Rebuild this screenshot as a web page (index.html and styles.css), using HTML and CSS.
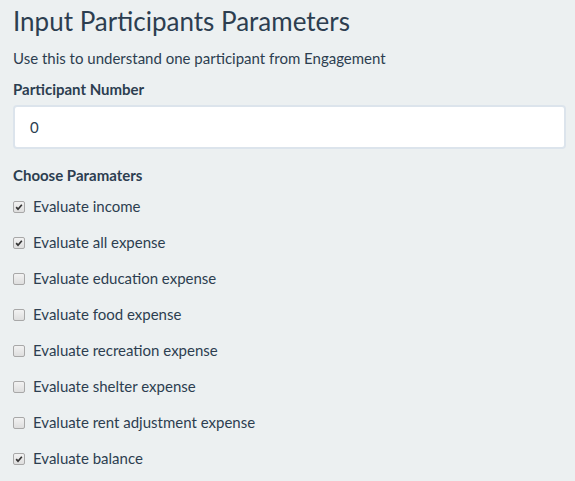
FILE: index.html
```html
<!DOCTYPE html>
<html>
<head>
<meta charset="utf-8">
<link rel="stylesheet" href="styles.css">
</head>
<body>
<div class="panel">
  <h3 class="title">Input Participants Parameters</h3>
  <p class="sub">Use this to understand one participant from Engagement</p>
  <label class="ctl-label" for="pn">Participant Number</label>
  <div class="input">0</div>
  <label class="ctl-label choose">Choose Paramaters</label>
  <div class="checks">
    <div class="row"><span class="cb on"><svg viewBox="0 0 12 12"><path d="M2.6 6.2 L4.8 8.6 L9.4 3.2" /></svg></span><span>Evaluate income</span></div>
    <div class="row"><span class="cb on"><svg viewBox="0 0 12 12"><path d="M2.6 6.2 L4.8 8.6 L9.4 3.2" /></svg></span><span>Evaluate all expense</span></div>
    <div class="row"><span class="cb"></span><span>Evaluate education expense</span></div>
    <div class="row"><span class="cb"></span><span>Evaluate food expense</span></div>
    <div class="row"><span class="cb"></span><span>Evaluate recreation expense</span></div>
    <div class="row"><span class="cb"></span><span>Evaluate shelter expense</span></div>
    <div class="row"><span class="cb"></span><span>Evaluate rent adjustment expense</span></div>
    <div class="row"><span class="cb on"><svg viewBox="0 0 12 12"><path d="M2.6 6.2 L4.8 8.6 L9.4 3.2" /></svg></span><span>Evaluate balance</span></div>
  </div>
</div>
</body>
</html>
```
FILE: styles.css
```css
html, body {
  margin: 0;
  padding: 0;
  background: #ecf0f1;
}
body {
  font-family: Lato, "Open Sans", sans-serif;
  font-size: 15px;
  color: #2c3e50;
}
.panel {
  display: flex;
  flex-direction: column;
  padding: 6px 9px 0 13px;
}
.title {
  margin: 0 0 11px;
  font-size: 26px;
  font-weight: 400;
  line-height: 31px;
}
.sub {
  margin: 0 0 10px;
  line-height: 21px;
}
.ctl-label {
  font-weight: 700;
  line-height: 21px;
  margin-bottom: 5px;
}
.input {
  box-sizing: border-box;
  height: 44px;
  background: #fff;
  border: 2px solid #dce4ec;
  border-radius: 4px;
  padding: 0 15px;
  display: flex;
  align-items: center;
  line-height: 21px;
}
.choose {
  margin-top: 16px;
  margin-bottom: 10px;
}
.checks {
  display: flex;
  flex-direction: column;
  gap: 15px;
}
.row {
  display: flex;
  align-items: center;
  gap: 8px;
  line-height: 21px;
}
.cb {
  box-sizing: border-box;
  width: 12px;
  height: 12px;
  border: 1px solid #a8a8a8;
  border-radius: 2px;
  background: linear-gradient(#f2f2f2, #dedede);
  display: flex;
  flex: none;
}
.cb svg {
  width: 10px;
  height: 10px;
}
.cb path {
  fill: none;
  stroke: #333;
  stroke-width: 2;
}
```
